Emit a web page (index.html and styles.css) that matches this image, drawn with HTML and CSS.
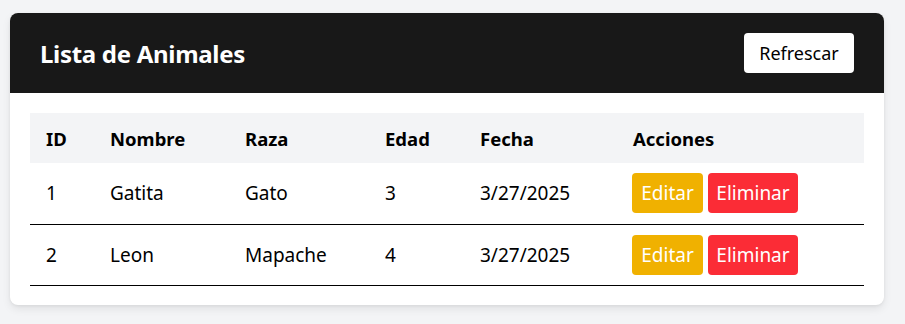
FILE: index.html
```html
<!DOCTYPE html>
<html lang="es">
<head>
<meta charset="utf-8">
<title>Lista de Animales</title>
<link rel="stylesheet" href="styles.css">
</head>
<body>
<div class="card">
  <div class="card-header">
    <h1 class="title">Lista de Animales</h1>
    <button class="btn btn-light">Refrescar</button>
  </div>
  <div class="card-body">
    <table class="table">
      <thead>
        <tr>
          <th class="c-id">ID</th>
          <th class="c-nombre">Nombre</th>
          <th class="c-raza">Raza</th>
          <th class="c-edad">Edad</th>
          <th class="c-fecha">Fecha</th>
          <th class="c-acc">Acciones</th>
        </tr>
      </thead>
      <tbody>
        <tr>
          <td>1</td><td>Gatita</td><td>Gato</td><td>3</td><td>3/27/2025</td>
          <td><div class="actions"><button class="btn btn-warn">Editar</button><button class="btn btn-danger">Eliminar</button></div></td>
        </tr>
        <tr>
          <td>2</td><td>Leon</td><td>Mapache</td><td>4</td><td>3/27/2025</td>
          <td><div class="actions"><button class="btn btn-warn">Editar</button><button class="btn btn-danger">Eliminar</button></div></td>
        </tr>
      </tbody>
    </table>
  </div>
</div>
</body>
</html>
```
FILE: styles.css
```css
* { box-sizing: border-box; }
html, body { margin: 0; }
body {
  background: #f3f4f6;
  font-family: "Noto Sans", "Open Sans", sans-serif;
  color: #000;
  padding: 13px 21px 20px 10px;
}
.card {
  background: #fff;
  border-radius: 8px;
  box-shadow: 0 4px 8px rgba(0,0,0,0.08), 0 1px 3px rgba(0,0,0,0.06);
  overflow: hidden;
}
.card-header {
  background: #181818;
  height: 80px;
  display: flex;
  align-items: center;
  justify-content: space-between;
  padding: 0 30px 0 30px;
}
.title {
  margin: 0;
  color: #fff;
  font-size: 24px;
  font-weight: 700;
  letter-spacing: -0.3px;
}
.btn {
  border: none;
  font-family: inherit;
  font-size: 18px;
  border-radius: 4px;
  height: 40px;
  padding: 0;
  cursor: pointer;
}
.btn-light { background: #fff; color: #000; width: 110px; }
.btn-warn { background: #f0b100; color: #fff; width: 71px; font-size: 19px; }
.btn-danger { background: #fb2c36; color: #fff; width: 90px; font-size: 19px; }
.card-body { padding: 20px 20px 19px 20px; }
.table {
  width: 100%;
  border-collapse: collapse;
  font-size: 19px;
}
.table thead tr { background: #f3f4f6; }
.table th {
  text-align: left;
  font-weight: 700;
  font-size: 18.5px;
  height: 50px;
  padding: 0 16px;
}
.table td {
  height: 61px;
  padding: 0 16px;
  border-bottom: 1px solid #000;
}
.c-id { width: 64px; }
.c-nombre { width: 135px; }
.c-raza { width: 140px; }
.c-edad { width: 95px; }
.c-fecha { width: 153px; }
.actions { display: flex; gap: 5px; margin-left: -1px; }
```
